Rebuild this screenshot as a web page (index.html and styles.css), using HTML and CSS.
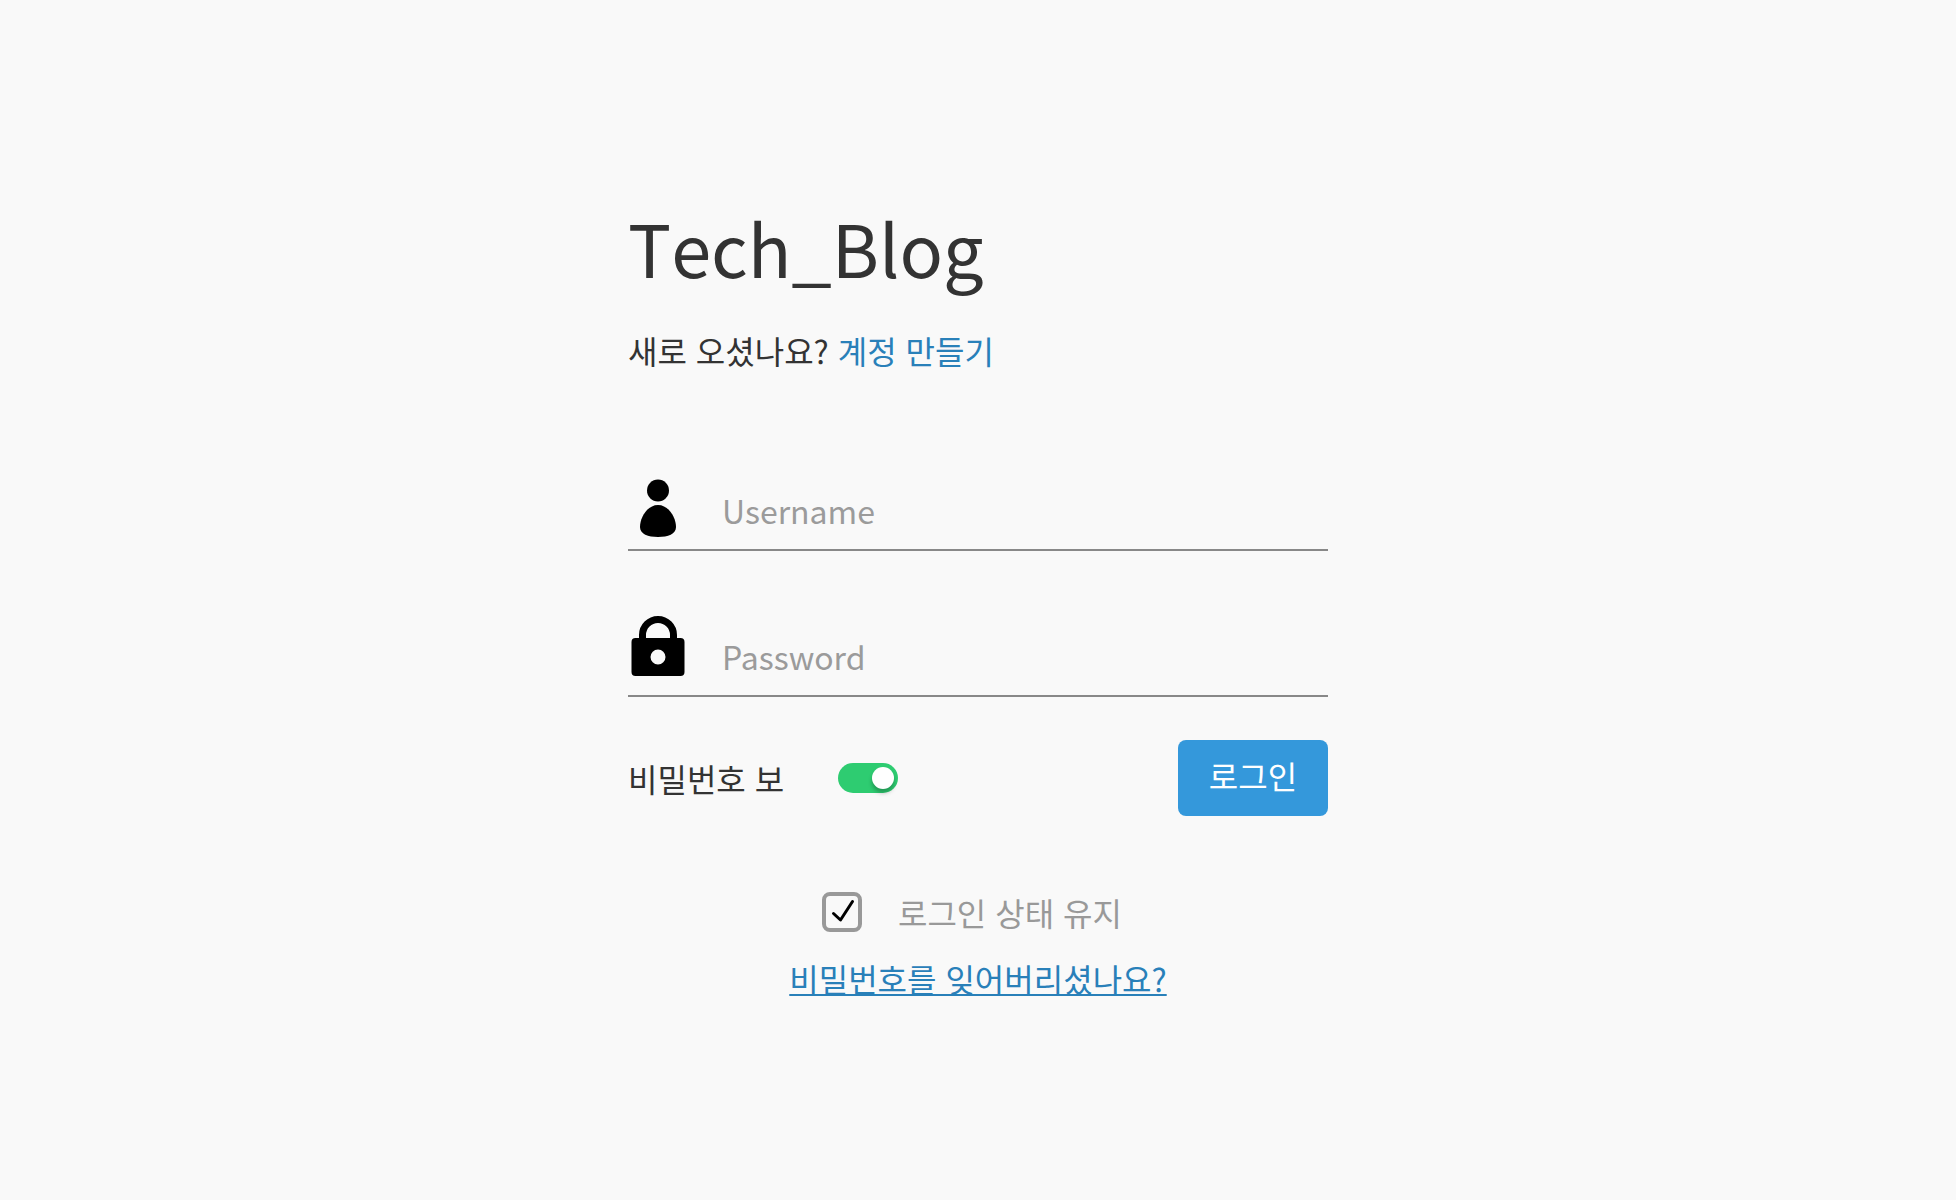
FILE: index.html
```html
<!DOCTYPE html>
<html lang="ko">
<head>
<meta charset="utf-8">
<meta name="viewport" content="width=device-width, initial-scale=1">
<title>Tech_Blog</title>
<link rel="stylesheet" href="styles.css">
</head>
<body>
<main class="login">
  <h1 class="title">Tech_Blog</h1>
  <p class="signup">새로 오셨나요? <a class="link" href="#signup">계정 만들기</a></p>
  <form class="form">
    <div class="fields">
      <div class="field">
        <label class="field-icon" for="username" aria-label="Username">
          <svg width="60" height="60" viewBox="0 0 60 60"><circle cx="30" cy="18.500" r="11"/><path d="M30 33C41 33 48 46 48 55C48 62 40 65 30 65C20 65 12 62 12 55C12 46 19 33 30 33Z"/></svg>
        </label>
        <input class="input" id="username" type="text" placeholder="Username">
      </div>
      <div class="field">
        <label class="field-icon" for="password" aria-label="Password">
          <svg width="60" height="60" viewBox="0 0 60 60"><path d="M14.500 24V17a15.500 15.500 0 0 1 31 0V24" fill="none" stroke="#000" stroke-width="7"/><path fill-rule="evenodd" d="M7.500 20h45a4 4 0 0 1 4 4v30a4 4 0 0 1-4 4h-45a4 4 0 0 1-4-4V24a4 4 0 0 1 4-4ZM30 31.500a7.500 7.500 0 1 0 0 15a7.500 7.500 0 1 0 0-15Z"/></svg>
        </label>
        <input class="input" id="password" type="password" placeholder="Password">
      </div>
    </div>
    <div class="actions">
      <label class="toggle-label" for="show">비밀번호 보</label>
      <input class="toggle" id="show" type="checkbox" checked>
      <button class="submit" type="submit">로그인</button>
    </div>
    <div class="remember">
      <span class="check">
        <input class="check-box" id="remember" type="checkbox" checked>
        <svg class="check-mark" width="40" height="40" viewBox="0 0 40 40"><path d="M11.500 21.500L18.500 28L30.500 9.500"/></svg>
      </span>
      <label for="remember">로그인 상태 유지</label>
    </div>
  </form>
  <a class="link forgot" href="#forgot">비밀번호를 잊어버리셨나요?</a>
</main>
</body>
</html>
```
FILE: styles.css
```css
* { box-sizing: border-box; }

body {
  margin: 0;
  min-height: 100vh;
  padding: 24px;
  display: flex;
  justify-content: center;
  align-items: center;
  background: #f9f9f9;
  color: #333;
  font-family: "Noto Sans CJK KR", sans-serif;
  font-size: 32px;
  line-height: 48px;
}

input, button { font: inherit; margin: 0; }

.login {
  width: 100%;
  max-width: 700px;
  padding-bottom: 3px;
  display: flex;
  flex-direction: column;
}

.title {
  margin: 0;
  font-size: 72px;
  font-weight: 400;
  font-kerning: none;
  line-height: 104px;
}

.signup { margin: 27px 0 0; }

.link { color: #2980b9; text-decoration: none; }

.form { margin-top: 81px; }

.fields {
  display: flex;
  flex-direction: column;
  gap: 50px;
}

.field {
  display: flex;
  align-items: center;
  height: 96px;
  border-bottom: 2px solid #888;
}

.field-icon { display: flex; width: 60px; }
.field-icon svg { overflow: visible; }

.input {
  flex: 1;
  align-self: stretch;
  min-width: 0;
  margin-left: 34px;
  padding: 16px 0 0;
  border: 0;
  outline: 0;
  background: transparent;
  color: #333;
}
.input::placeholder { color: #9b9b9b; opacity: 1; }

.actions { display: flex; align-items: center; margin-top: 43px; }

.toggle-label { width: 210px; }

.toggle {
  appearance: none;
  display: flex;
  justify-content: flex-end;
  width: 60px;
  height: 30px;
  padding: 4px;
  border-radius: 15px;
  background: #2ecc71;
}
.toggle::before {
  content: "";
  width: 22px;
  height: 22px;
  border-radius: 50%;
  background: #fff;
  box-shadow: 0 4px 4px rgba(0, 0, 0, 0.25);
}
.toggle:not(:checked) { justify-content: flex-start; background: #999; }

.submit {
  width: 150px;
  height: 76px;
  margin-left: auto;
  padding: 0 0 6px;
  border: 0;
  border-radius: 8px;
  background: #3498db;
  color: #fff;
}

.remember {
  display: flex;
  justify-content: center;
  align-items: center;
  gap: 36px;
  margin-top: 72px;
  padding-right: 12px;
  color: #999;
}

.check { position: relative; width: 40px; height: 40px; }
.check-box {
  appearance: none;
  display: block;
  width: 40px;
  height: 40px;
  border: 4px solid #999;
  border-radius: 8px;
}
.check-mark {
  position: absolute;
  inset: 0;
  fill: none;
  stroke: #000;
  stroke-width: 3;
  stroke-linecap: round;
  stroke-linejoin: round;
  pointer-events: none;
}
.check-box:not(:checked) + .check-mark { display: none; }

.forgot {
  align-self: center;
  margin-top: 18px;
  text-decoration: underline;
  text-decoration-thickness: 2px;
  text-underline-offset: 2px;
}
```
